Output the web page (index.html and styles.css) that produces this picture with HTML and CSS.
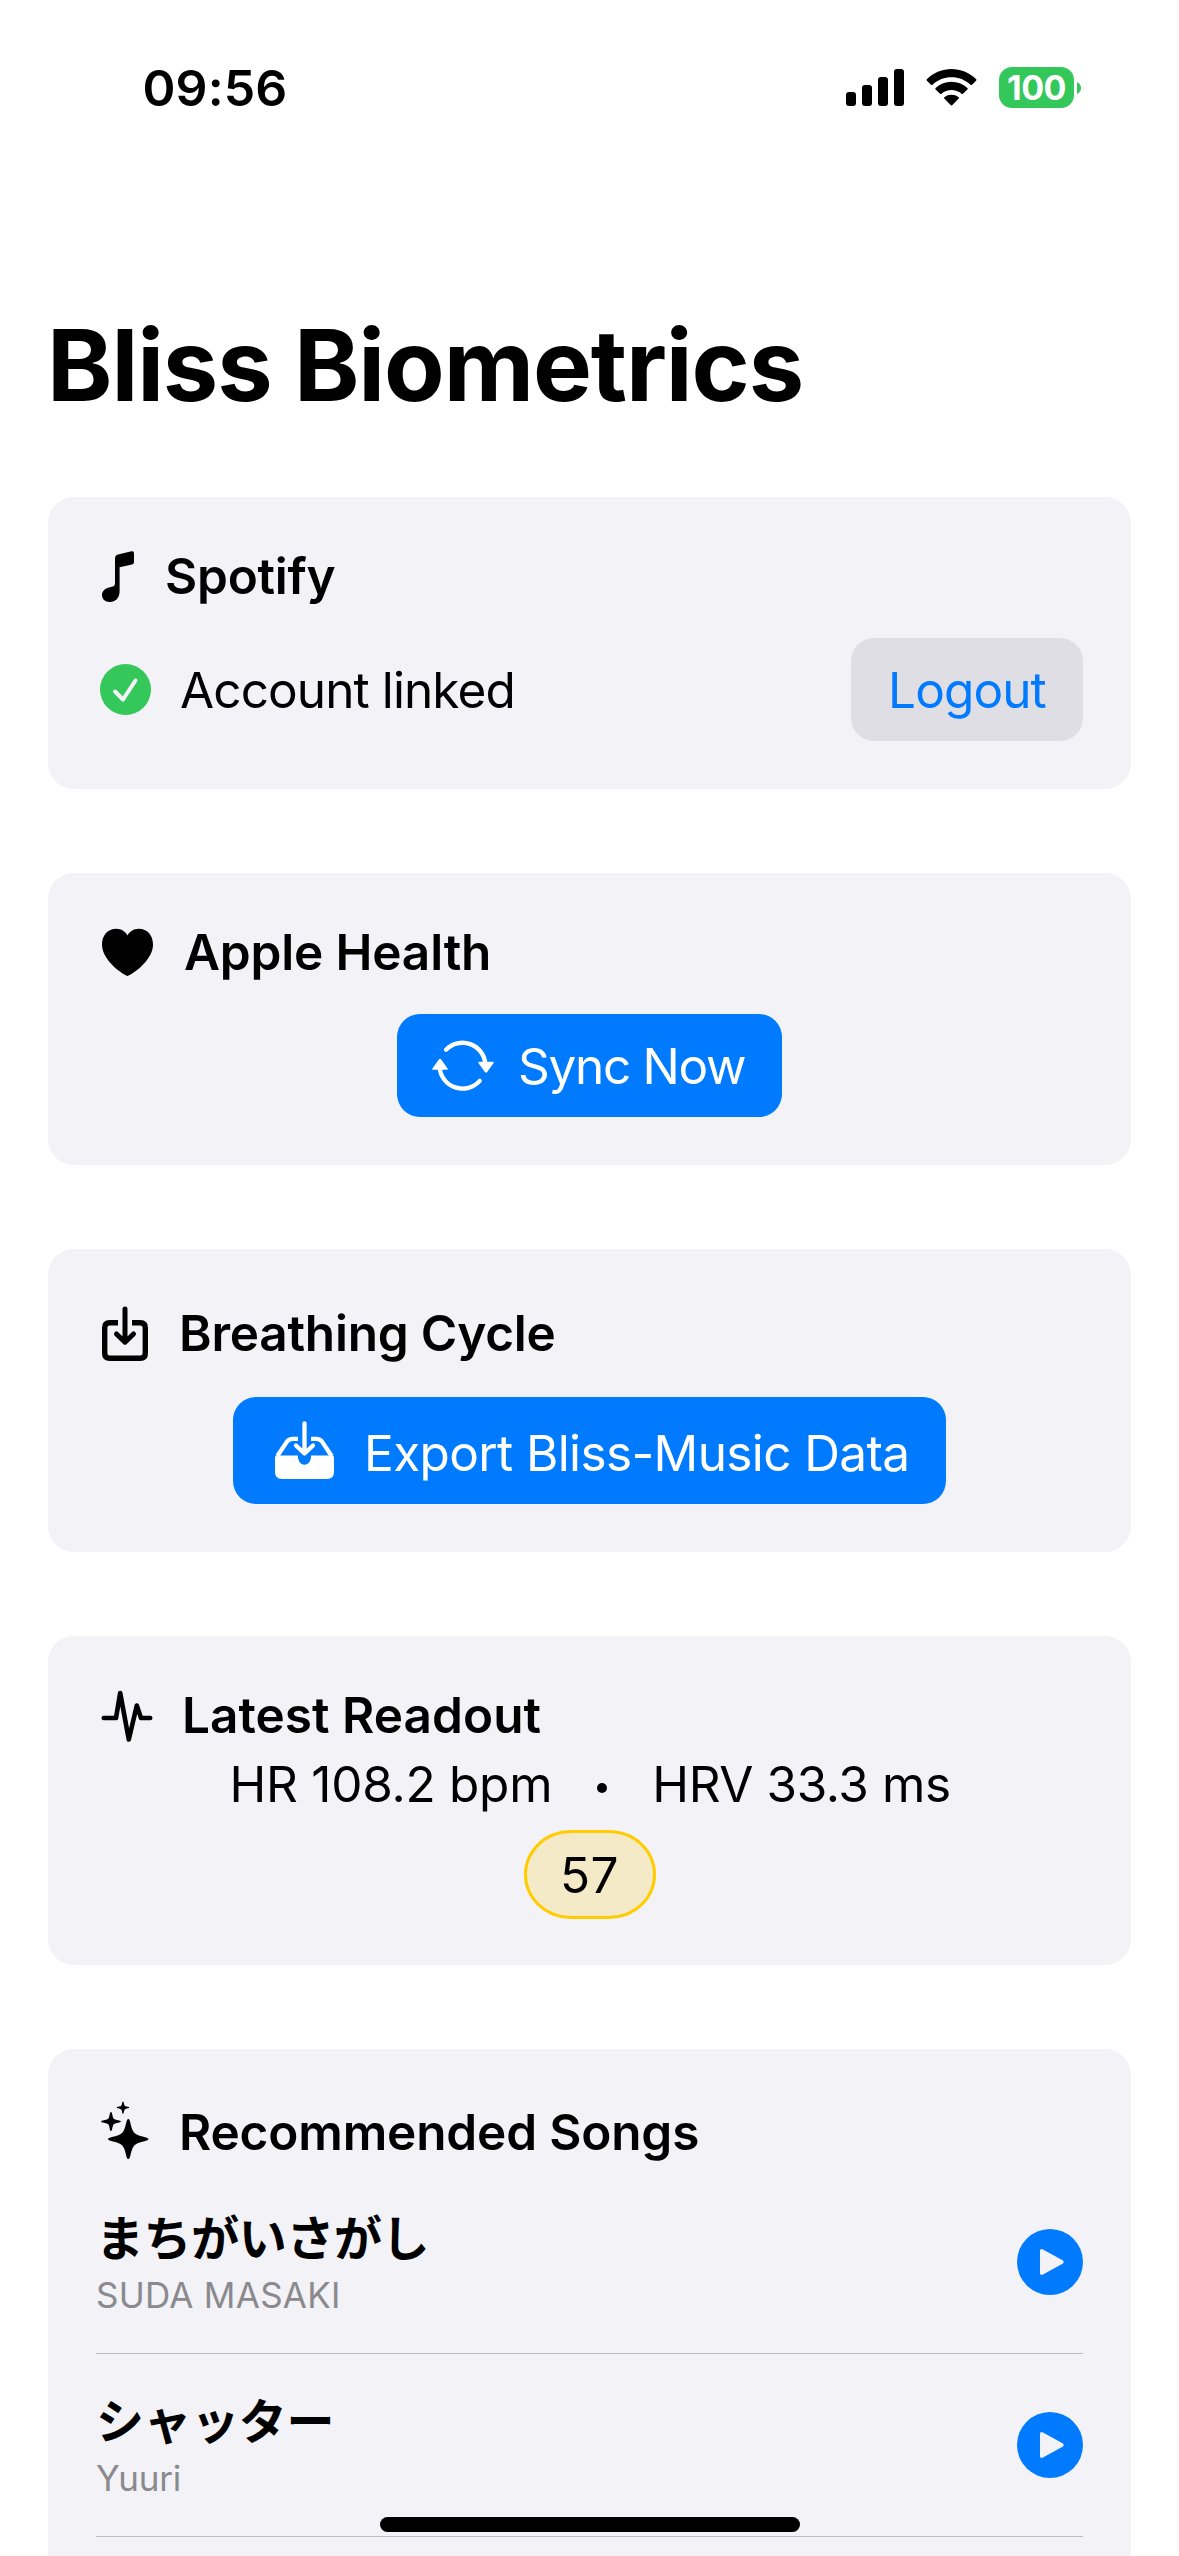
FILE: index.html
```html
<!DOCTYPE html>
<html lang="en">
<head>
<meta charset="utf-8">
<title>Bliss Biometrics</title>
<link rel="stylesheet" href="styles.css">
</head>
<body>
<header class="status">
  <span class="time">09:56</span>
  <div class="indicators">
    <svg width="58" height="38" viewBox="0 0 58 38"><rect y="23" width="10" height="14" rx="3"/><rect x="16" y="16" width="10" height="21" rx="3"/><rect x="32" y="8" width="10" height="29" rx="3"/><rect x="48" width="10" height="37" rx="3"/></svg>
    <svg class="wifi" width="51" height="38" viewBox="0 0 51 38"><path d="M.8 10.2Q.2 11 .9 11.8L5 15.8Q5.7 16.4 6.5 15.7C17 5.8 34 5.8 44.500 15.700Q45.300 16.400 46 15.800L50.100 11.800Q50.800 11 50.200 10.200C36.200-3.400 14.800-3.400 .8 10.200Z"/><path d="M9.600 19Q8.900 19.700 9.600 20.400L14 24.700Q14.700 25.300 15.500 24.700C21.200 19.900 29.800 19.900 35.500 24.700Q36.300 25.300 37 24.700L41.400 20.400Q42.100 19.700 41.400 19C32.500 10.700 18.500 10.700 9.600 19Z"/><path d="M18.300 28.200Q17.600 28.900 18.300 29.600L24.600 36Q25.500 36.800 26.400 36L32.700 29.600Q33.400 28.900 32.700 28.200C28.600 24.900 22.400 24.900 18.300 28.200Z"/></svg>
    <div class="battery"><span class="level">100</span></div>
    <svg class="nub" width="4" height="12" viewBox="0 0 4 12"><path d="M0 0Q4 2 4 6T0 12Z"/></svg>
  </div>
</header>
<main>
  <h1>Bliss Biometrics</h1>

  <section class="card">
    <h2 class="ls-a"><svg width="69" height="61" viewBox="0 0 69 61"><path d="M19 13.500Q19 10.400 22 9.600L35.500 6.300Q38 5.800 38 8.200V17Q38 19 36 19.500L23.600 22.300V46C23.600 53 19.500 57 13.700 57C9 57 6 54 6 50C6 46 9 43.300 13 42.400L16.500 41.600Q19 41 19 38.500Z"/></svg>Spotify</h2>
    <div class="account">
      <svg width="84" height="61" viewBox="0 0 84 61"><circle class="ok" cx="29.500" cy="30.500" r="25.500"/><path class="line check" d="M19 32.500L27 40.500L39.500 21.500"/></svg>
      <span class="linked">Account linked</span>
      <button class="logout">Logout</button>
    </div>
  </section>

  <section class="card">
    <h2 class="ls-b"><svg width="88" height="61" viewBox="0 0 88 61"><path d="M31.500 55C29.500 55 6 40.500 6 23.500C6 14 12 7.700 20 7.700C25.500 7.700 29.500 10.500 31.500 14.500C33.500 10.500 37.500 7.700 43 7.700C51 7.700 57 14 57 23.500C57 40.500 33.500 55 31.500 55Z"/></svg>Apple Health</h2>
    <button class="primary sync"><svg width="86" height="61" viewBox="0 0 86 61"><path class="line" d="M14 14.700A23 23 0 0 1 53.400 29M47.700 45.900A23 23 0 0 1 7.600 32.400"/><path d="M46.800 26.700H61.200Q62.200 26.900 61.600 28L55.200 37Q54 38.300 52.800 37L46.400 28Q45.800 26.900 46.800 26.700ZM.8 34.700H15.200Q16.200 34.500 15.600 33.400L9.200 24.400Q8 23.100 6.800 24.400L.4 33.400Q-.2 34.500 .8 34.700Z"/></svg>Sync Now</button>
  </section>

  <section class="card">
    <h2 class="tall ls-a"><svg width="83" height="68" viewBox="0 0 83 68"><path class="line box" d="M22 25.700H13.700Q8.700 25.700 8.700 30.700V56.300Q8.700 61.300 13.700 61.300H44.300Q49.300 61.300 49.300 56.300V30.700Q49.300 25.700 44.300 25.700H36"/><path class="line arrow" d="M29 12V44M20.500 37L29 45.200L37.500 37"/></svg><span>Breathing Cycle</span></h2>
    <button class="primary export"><svg width="89" height="61" viewBox="0 0 89 61"><path d="M0 35L1 33.500H22.900C22.900 39 25.500 42.700 29.500 42.700S36.100 39 36.100 33.500H58L59 35V50Q59 57 52 57H7Q0 57 0 50Z"/><path class="line tray" d="M23 16.800H17.500Q14 16.800 12 19.600L2.300 34M36 16.800H41.500Q45 16.800 47 19.600L56.700 34"/><path class="line" d="M29.500 1.500V30M21 23.500L29.500 31.500L38 23.500"/></svg>Export Bliss-Music Data</button>
  </section>

  <section class="card readout">
    <h2 class="ls-0"><svg width="86" height="61" viewBox="0 0 86 61"><path class="line pulse" d="M7.800 34H20L24.200 9L32.800 55.500L40.800 21.500L45 34H54.200"/></svg>Latest Readout</h2>
    <div class="vitals"><span>HR 108.2 bpm</span><i class="dot"></i><span class="hrv">HRV 33.3 ms</span></div>
    <div class="score">57</div>
  </section>

  <section class="card songs">
    <h2 class="ls-b"><svg width="83" height="68" viewBox="0 0 83 68"><path d="M32.300 22C34.600 22 34.200 29 37.200 34.300Q38.300 36.300 40.300 37.200C45.600 40 52.500 40 52.500 42.100C52.500 44.200 45.600 44.200 40.300 47Q38.300 48 37.200 49.900C34.200 55.200 34.600 62 32.300 62C30 62 30.400 55.200 27.400 49.900Q26.300 48 24.300 47C19 44.200 12 44.200 12 42.100C12 40 19 40 24.300 37.200Q26.300 36.300 27.400 34.300C30.400 29 30 22 32.300 22ZM15 15C16.500 15 16 19.200 17.700 21.700C20.200 23.500 24.800 23 24.800 24.500C24.800 26 20.200 25.500 17.700 27.300C16 29.800 16.500 34 15 34C13.500 34 14 29.800 12.300 27.300C9.800 25.500 5.200 26 5.200 24.500C5.200 23 9.800 23.500 12.300 21.700C14 19.200 13.500 15 15 15ZM27 4.500C28 4.500 27.600 7.400 28.900 8.800C30.300 10 33.300 9.600 33.300 10.600C33.300 11.600 30.300 11.200 28.900 12.400C27.600 13.800 28 16.700 27 16.700C26 16.700 26.400 13.800 25.100 12.400C23.700 11.200 20.700 11.600 20.700 10.600C20.700 9.600 23.700 10 25.100 8.800C26.400 7.400 26 4.500 27 4.500Z"/></svg><span>Recommended Songs</span></h2>
    <div class="song">
      <div class="meta"><span class="name" lang="ja">まちがいさがし</span><span class="artist">SUDA MASAKI</span></div>
      <svg class="play" width="66" height="66" viewBox="0 0 66 66"><circle cx="33" cy="33" r="33"/><path d="M23 22Q23 19.500 25.500 20.200L46 31.500Q47.500 33 46 34.500L25.500 45.800Q23 46.500 23 44Z"/></svg>
    </div>
    <div class="song">
      <div class="meta"><span class="name" lang="ja">シャッター</span><span class="artist yuuri">Yuuri</span></div>
      <svg class="play" width="66" height="66" viewBox="0 0 66 66"><circle cx="33" cy="33" r="33"/><path d="M23 22Q23 19.500 25.500 20.200L46 31.500Q47.500 33 46 34.500L25.500 45.800Q23 46.500 23 44Z"/></svg>
    </div>
  </section>
</main>
<div class="home"></div>
</body>
</html>
```
FILE: styles.css
```css
* { box-sizing: border-box; }
html, body { margin: 0; height: 2556px; overflow: hidden; }
body {
  position: relative;
  background: #fff;
  color: #000;
  font: 400 49.5px/63px Inter, "Noto Sans CJK JP", sans-serif;
  font-kerning: normal;
}
svg { display: block; flex: none; overflow: visible; fill: currentColor; }
button { border: 0; font: inherit; }

.line { fill: none; stroke: currentColor; stroke-width: 4.3; stroke-linecap: round; stroke-linejoin: round; }
.box { stroke-width: 5.4; stroke-linecap: butt; }
.arrow { stroke-width: 5; }
.tray { stroke-linecap: butt; }
.pulse { stroke-width: 4.6; }
.ok { fill: #34c759; }
.check { stroke: #f2f2f7; stroke-width: 4; }

/* Status bar */
.status { display: flex; justify-content: space-between; height: 307px; padding: 58px 98px 0 142.5px; line-height: 61px; }
.time { font-size: 50px; font-weight: 600; letter-spacing: .1px; }
.indicators { display: flex; align-items: flex-start; padding-top: 11px; }
.wifi { margin-left: 22px; }
.battery {
  width: 75px; height: 41px; margin: -2px 0 0 22px;
  border-radius: 13px; background: #34c759; color: #fff;
  font-size: 34px; font-weight: 700; line-height: 41px; text-align: center;
}
.level { letter-spacing: -.5px; }
.nub { margin: 13px 0 0 3px; fill: #34c759; }

/* Page */
h1 { margin: 0; padding: 0 47px; height: 190px; font-size: 99px; line-height: 117px; font-weight: 700; letter-spacing: -1.1px; white-space: nowrap; }
.card { margin: 0 48px 84px; padding: 48px; border-radius: 26px; background: #f2f2f7; }
h2 { display: flex; height: 61px; margin: 0 0 32px; font-size: inherit; font-weight: 600; white-space: nowrap; }
h2.tall { height: 68px; }
h2.tall span { padding-top: 5px; }
.ls-a { letter-spacing: -.22px; }
.ls-b { letter-spacing: -.16px; }
.ls-0 { letter-spacing: .04px; }

.account { display: flex; align-items: center; }
.linked { flex: 1; padding-top: 2px; letter-spacing: -.9px; }
.logout {
  width: 232px; height: 103px; padding: 2px 0 0; border-radius: 23px;
  background: #dfdee4; color: #007aff; letter-spacing: -.9px;
}
.primary {
  display: flex; height: 103px; margin: 0 auto; padding: 21px 0 0 35px;
  border-radius: 23px; background: #007aff; color: #fff; white-space: nowrap;
}
.sync { width: 385px; letter-spacing: -1.3px; }
.export { width: 713px; height: 107px; padding: 25px 0 0 42px; letter-spacing: -.62px; }

.readout h2 { margin-bottom: 8px; }
.vitals { display: flex; align-items: flex-start; height: 61px; padding-left: 133.5px; letter-spacing: -.25px; white-space: pre; }
.dot { width: 10px; height: 10px; margin: 30px 45.500px 0 44.500px; border-radius: 50%; background: #000; }
.hrv { letter-spacing: -.4px; }
.score {
  width: 132px; height: 89px; margin: 16px auto -2px; padding-top: 11px;
  border: 3px solid #fc0; border-radius: 47px / 44px;
  background: #f5eac7; text-align: center; letter-spacing: .5px;
}

.songs { margin-bottom: 0; height: 600px; }
.songs h2 { height: 74px; margin: 0; }
.songs h2 span { padding-top: 4px; }
.song { display: flex; justify-content: space-between; align-items: center; height: 183px; border-bottom: 1px solid #bcbbc1; }
.meta { display: flex; flex-direction: column; height: 120px; }
.name { height: 72px; padding-top: 3px; font: 700 48px/61px "Noto Sans CJK JP", sans-serif; letter-spacing: -.4px; }
.artist { color: #8a8a8e; font-size: 35px; line-height: 43px; letter-spacing: .26px; }
.yuuri { letter-spacing: -.2px; }
.play { fill: #007aff; }
.play path { fill: #f2f2f7; }

.home { position: absolute; left: 380px; top: 2517px; width: 420px; height: 15px; border-radius: 8px; background: #000; }
```
